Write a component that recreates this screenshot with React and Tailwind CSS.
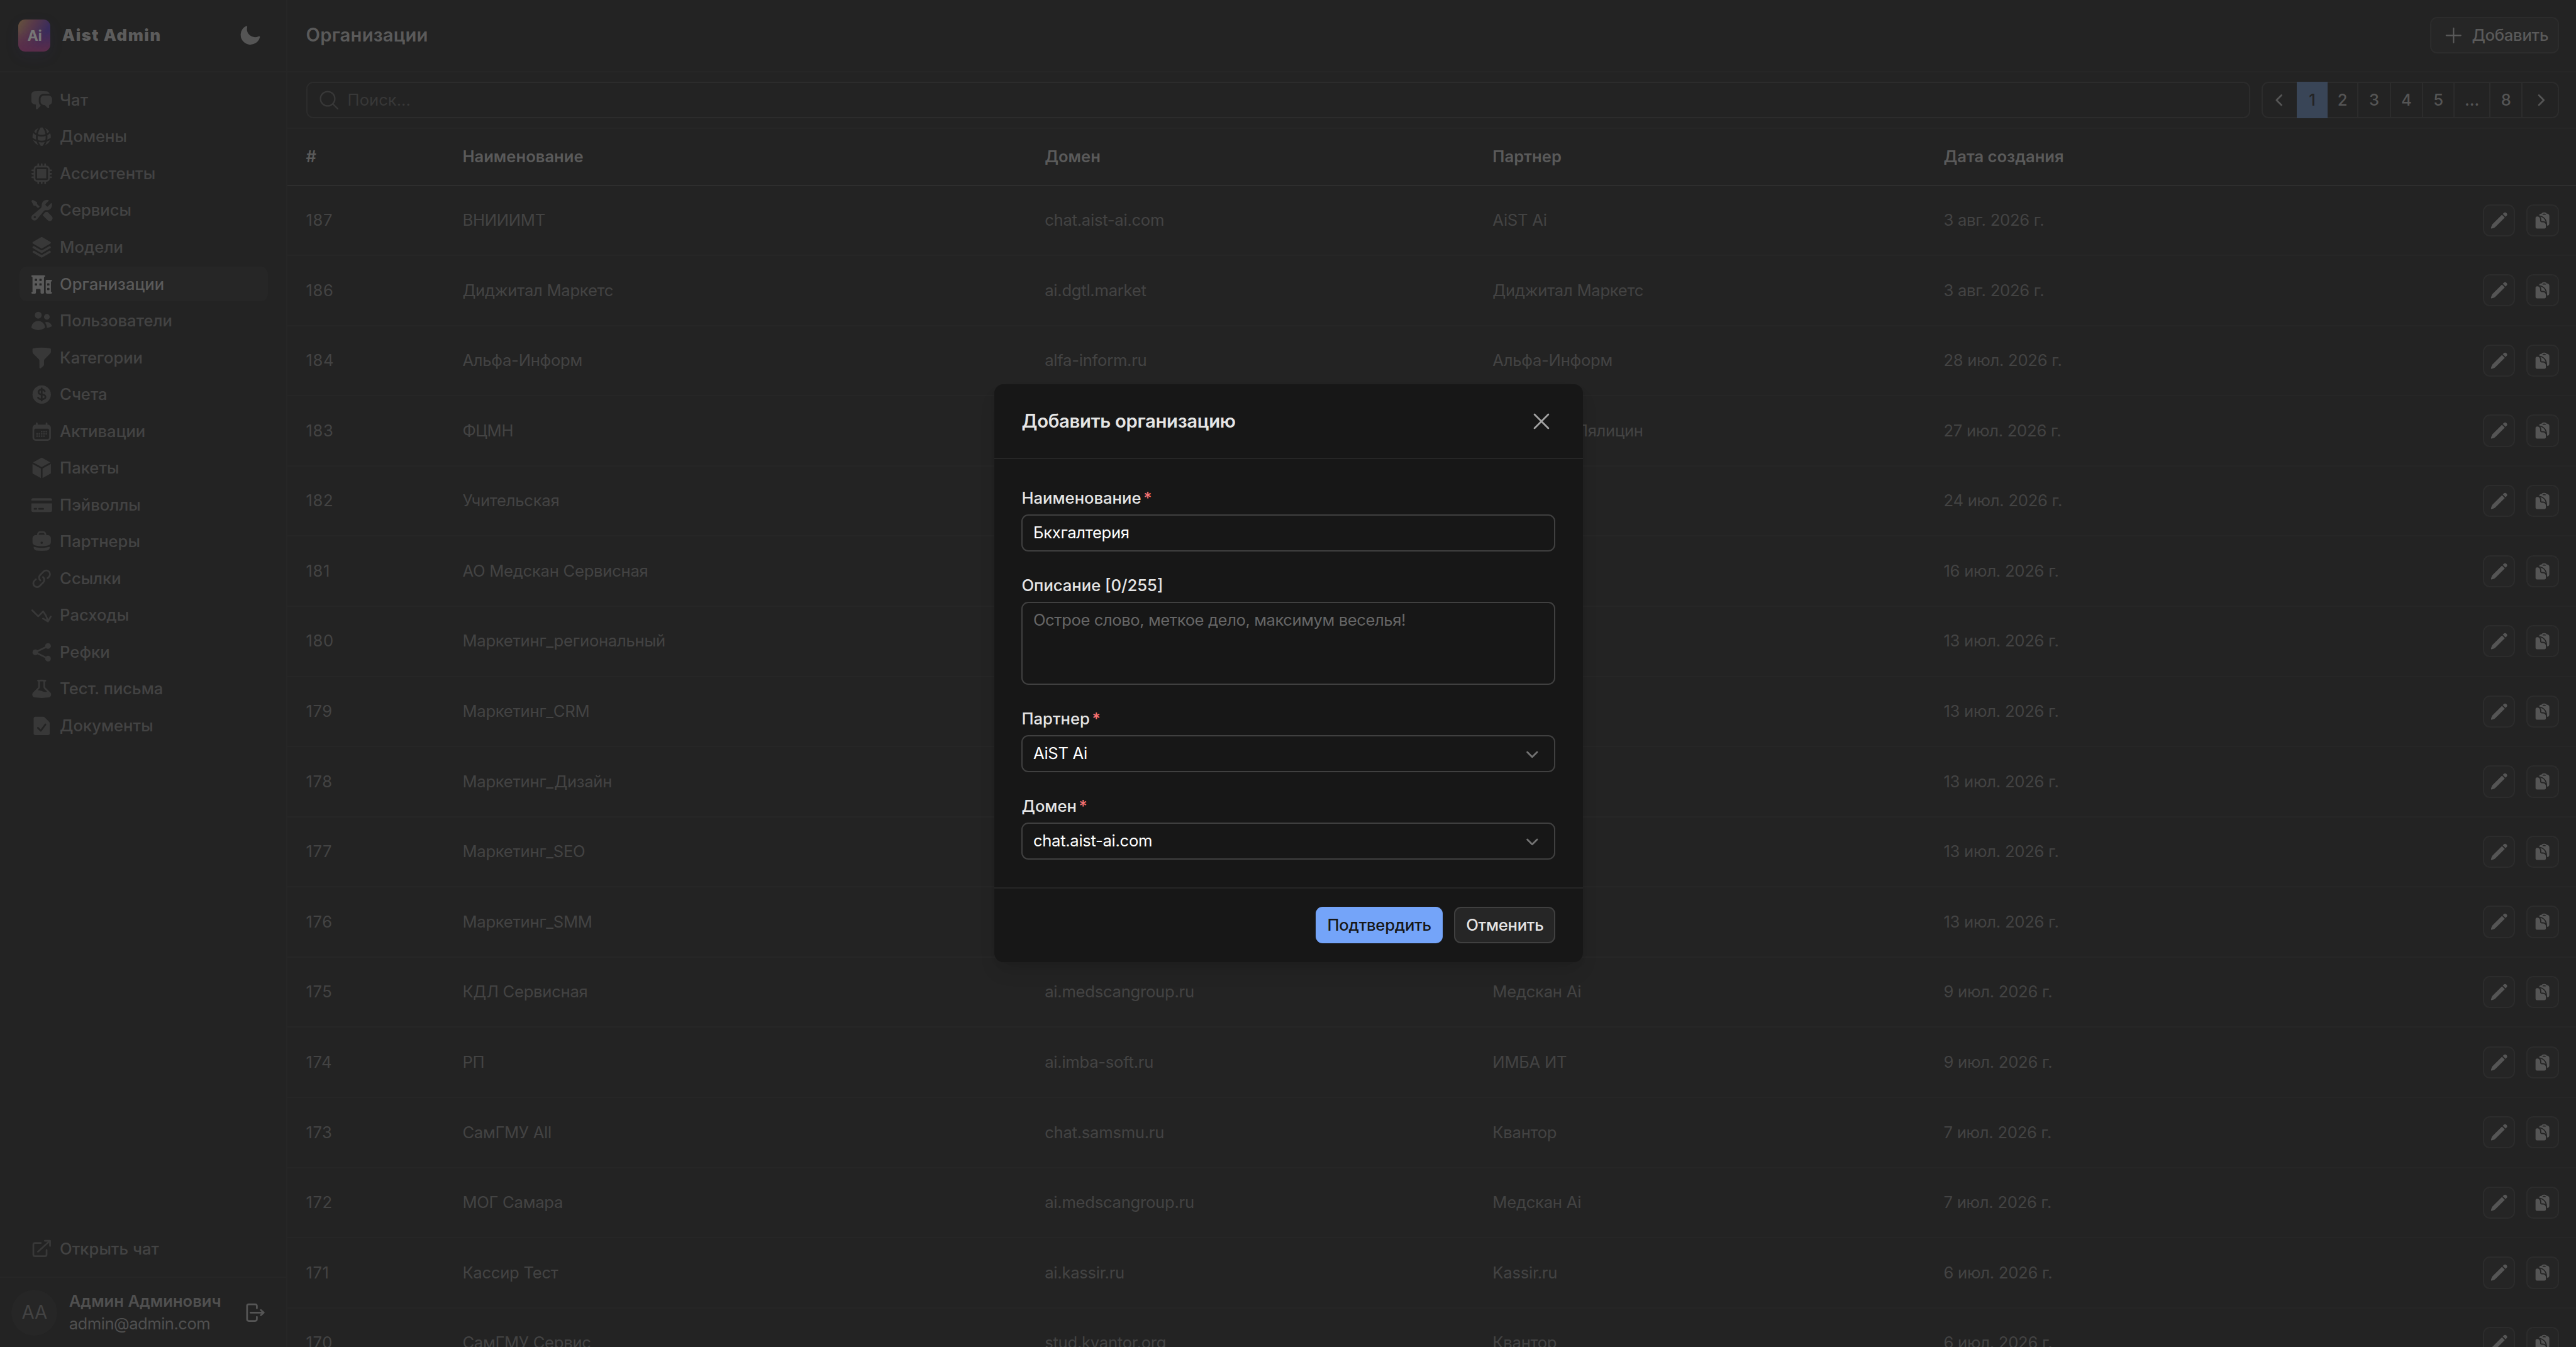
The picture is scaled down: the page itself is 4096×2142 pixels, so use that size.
import {
    HiClipboardDocument,
    HiMiniArrowRightOnRectangle,
    HiMiniArrowTopRightOnSquare,
    HiMiniArrowTrendingDown,
    HiMiniBeaker,
    HiMiniBriefcase,
    HiMiniBuildingOffice2,
    HiMiniCalendarDays,
    HiMiniChatBubbleLeftRight,
    HiMiniChevronDown,
    HiMiniChevronLeft,
    HiMiniChevronRight,
    HiMiniCpuChip,
    HiMiniCreditCard,
    HiMiniCube,
    HiMiniCurrencyDollar,
    HiMiniDocumentCheck,
    HiMiniFunnel,
    HiMiniGlobeAlt,
    HiMiniLink,
    HiMiniMoon,
    HiMiniShare,
    HiMiniSquare3Stack3D,
    HiMiniUsers,
    HiMiniWrenchScrewdriver,
    HiOutlineMagnifyingGlass,
    HiOutlinePlus,
    HiOutlineXMark,
    HiPencil,
} from 'react-icons/hi2';

document.documentElement.style.fontSize = `${(window.innerWidth / 2239) * 16}px`;

const NAV = [
    { label: 'Чат', icon: HiMiniChatBubbleLeftRight },
    { label: 'Домены', icon: HiMiniGlobeAlt },
    { label: 'Ассистенты', icon: HiMiniCpuChip },
    { label: 'Сервисы', icon: HiMiniWrenchScrewdriver },
    { label: 'Модели', icon: HiMiniSquare3Stack3D },
    { label: 'Организации', icon: HiMiniBuildingOffice2, active: true },
    { label: 'Пользователи', icon: HiMiniUsers },
    { label: 'Категории', icon: HiMiniFunnel },
    { label: 'Счета', icon: HiMiniCurrencyDollar },
    { label: 'Активации', icon: HiMiniCalendarDays },
    { label: 'Пакеты', icon: HiMiniCube },
    { label: 'Пэйволлы', icon: HiMiniCreditCard },
    { label: 'Партнеры', icon: HiMiniBriefcase },
    { label: 'Ссылки', icon: HiMiniLink },
    { label: 'Расходы', icon: HiMiniArrowTrendingDown },
    { label: 'Рефки', icon: HiMiniShare },
    { label: 'Тест. письма', icon: HiMiniBeaker },
    { label: 'Документы', icon: HiMiniDocumentCheck },
];

const ROWS = [
    { id: 187, name: 'ВНИИИМТ', domain: 'chat.aist-ai.com', partner: 'AiST Ai', date: '3 авг. 2026 г.' },
    { id: 186, name: 'Диджитал Маркетс', domain: 'ai.dgtl.market', partner: 'Диджитал Маркетс', date: '3 авг. 2026 г.' },
    { id: 184, name: 'Альфа-Информ', domain: 'alfa-inform.ru', partner: 'Альфа-Информ', date: '28 июл. 2026 г.' },
    { id: 183, name: 'ФЦМН', domain: 'chat.aist-ai.com', partner: 'Владимир Пялицин', date: '27 июл. 2026 г.' },
    { id: 182, name: 'Учительская', domain: 'chat.aist-ai.com', partner: 'AiST Ai', date: '24 июл. 2026 г.' },
    { id: 181, name: 'АО Медскан Сервисная', domain: 'ai.medscangroup.ru', partner: 'Медскан Ai', date: '16 июл. 2026 г.' },
    { id: 180, name: 'Маркетинг_региональный', domain: 'ai.medscangroup.ru', partner: 'Медскан Ai', date: '13 июл. 2026 г.' },
    { id: 179, name: 'Маркетинг_CRM', domain: 'ai.medscangroup.ru', partner: 'Медскан Ai', date: '13 июл. 2026 г.' },
    { id: 178, name: 'Маркетинг_Дизайн', domain: 'ai.medscangroup.ru', partner: 'Медскан Ai', date: '13 июл. 2026 г.' },
    { id: 177, name: 'Маркетинг_SEO', domain: 'ai.medscangroup.ru', partner: 'Медскан Ai', date: '13 июл. 2026 г.' },
    { id: 176, name: 'Маркетинг_SMM', domain: 'ai.medscangroup.ru', partner: 'Медскан Ai', date: '13 июл. 2026 г.' },
    { id: 175, name: 'КДЛ Сервисная', domain: 'ai.medscangroup.ru', partner: 'Медскан Ai', date: '9 июл. 2026 г.' },
    { id: 174, name: 'РП', domain: 'ai.imba-soft.ru', partner: 'ИМБА ИТ', date: '9 июл. 2026 г.' },
    { id: 173, name: 'СамГМУ All', domain: 'chat.samsmu.ru', partner: 'Квантор', date: '7 июл. 2026 г.' },
    { id: 172, name: 'МОГ Самара', domain: 'ai.medscangroup.ru', partner: 'Медскан Ai', date: '7 июл. 2026 г.' },
    { id: 171, name: 'Кассир Тест', domain: 'ai.kassir.ru', partner: 'Kassir.ru', date: '6 июл. 2026 г.' },
    { id: 170, name: 'СамГМУ Сервис', domain: 'stud.kvantor.org', partner: 'Квантор', date: '6 июл. 2026 г.' },
];

function Sidebar() {
    return (
        <aside className="flex h-full w-[15.625rem] shrink-0 flex-col border-r-2 border-[#262626]">
            <div className="flex h-[3.9375rem] shrink-0 items-center border-b-2 border-[#262626] pb-px pl-4 pr-4">
                <div className="flex size-7 items-center justify-center rounded-md bg-[linear-gradient(to_bottom,transparent_35%,#5a2c4a_100%),linear-gradient(120deg,#66533b_0%,#57384a_35%,#392c5c_70%,#3d2b5c_100%)] text-[0.8rem] font-bold tracking-tight text-[#777777] shadow-[0_0.25rem_0.75rem_rgba(60,50,120,0.12)]">
                    Ai
                </div>
                <span className="ml-2.5 text-sm font-black tracking-[0.06em] text-[#5c5c5c]">Aist Admin</span>
                <HiMiniMoon className="ml-auto mr-1.5 size-5 text-[#555555]" />
            </div>

            <nav className="flex flex-col px-4 py-2">
                {NAV.map(({ label, icon: Icon, active }) => (
                    <a key={label} className="flex h-8 py-[0.0625rem] pl-[0.0625rem]">
                        <span
                            className={
                                active
                                    ? 'flex grow items-center gap-1.5 rounded-md bg-[#262626] px-[0.5625rem] text-sm font-medium text-[#5a5a5a]'
                                    : 'flex grow items-center gap-1.5 px-[0.5625rem] text-sm font-medium text-[#434343]'
                            }
                        >
                            <Icon className={active ? 'size-5 text-[#5a5a5a]' : 'size-5 text-[#383838]'} />
                            {label}
                        </span>
                    </a>
                ))}
            </nav>

            <div className="mt-auto px-4 py-2">
                <a className="flex h-8 items-center gap-1.5 px-2.5 text-sm font-medium text-[#434343]">
                    <HiMiniArrowTopRightOnSquare className="size-5 text-[#383838]" />
                    Открыть чат
                </a>
            </div>

            <div className="flex shrink-0 items-center gap-2.5 border-t-2 border-[#262626] p-2.5 pr-[1.125rem]">
                <div className="flex size-10 items-center justify-center rounded-full bg-[#262626] text-base text-[#434343]">
                    АА
                </div>
                <div className="text-sm text-[#505050]">
                    <div className="font-semibold">Админ Админович</div>
                    <div className="tracking-[-0.02em]">admin@admin.com</div>
                </div>
                <HiMiniArrowRightOnRectangle className="ml-auto size-5 text-[#555555]" />
            </div>
        </aside>
    );
}

function Pagination() {
    return (
        <div className="flex h-8 shrink-0 items-stretch text-sm font-medium text-[#555555]">
            <div className="flex w-[1.92rem] items-center justify-center rounded-l-md border-2 border-r-0 border-[#2c2c2c]">
                <HiMiniChevronLeft className="size-5" />
            </div>
            <div className="flex w-[1.6625rem] items-center justify-center bg-[#394557] text-[#232323]">1</div>
            <div className="flex w-[1.69rem] items-center justify-center border-2 border-l-0 border-[#2c2c2c]">2</div>
            <div className="flex w-7 items-center justify-center border-y-2 border-r-2 border-[#2c2c2c]">3</div>
            <div className="flex w-7 items-center justify-center border-y-2 border-r-2 border-[#2c2c2c]">4</div>
            <div className="flex w-[1.725rem] items-center justify-center border-y-2 border-r-2 border-[#2c2c2c]">5</div>
            <div className="flex w-[1.9375rem] items-center justify-center border-y-2 border-r-2 border-[#2c2c2c]">...</div>
            <div className="flex w-7 items-center justify-center border-y-2 border-r-2 border-[#2c2c2c]">8</div>
            <div className="flex w-[1.955rem] items-center justify-center rounded-r-md border-y-2 border-r-2 border-[#2c2c2c]">
                <HiMiniChevronRight className="size-5" />
            </div>
        </div>
    );
}

function RowButton({ icon: Icon }) {
    return (
        <button className="flex size-7 items-center justify-center rounded-md border-2 border-[#2c2c2c] bg-[#252525] text-[#555555]">
            <Icon className="size-4" />
        </button>
    );
}

function Table() {
    return (
        <table className="w-full table-fixed text-left text-sm">
            <colgroup>
                <col className="w-[8.5rem]" />
                <col className="w-[31.63rem]" />
                <col className="w-[24.33rem]" />
                <col className="w-[24.5rem]" />
                <col />
                <col className="w-[5.0625rem]" />
            </colgroup>
            <thead>
                <tr className="h-[3.0625rem] border-b-2 border-[#2e2e2e] text-[#5a5a5a]">
                    <th className="px-4 font-semibold">#</th>
                    <th className="px-4 font-semibold">Наименование</th>
                    <th className="px-4 font-semibold">Домен</th>
                    <th className="px-4 font-semibold">Партнер</th>
                    <th className="px-4 font-semibold">Дата создания</th>
                    <th />
                </tr>
            </thead>
            <tbody className="tracking-[-0.01em] text-[#434343]">
                {ROWS.map((row) => (
                    <tr key={row.id} className="h-[3.8125rem] border-b-2 border-[#262626]">
                        <td className="px-4 tracking-[0.02em]">{row.id}</td>
                        <td className="px-4">{row.name}</td>
                        <td className="px-4">{row.domain}</td>
                        <td className="px-4">{row.partner}</td>
                        <td className="px-4">{row.date}</td>
                        <td>
                            <div className="flex gap-2.5">
                                <RowButton icon={HiPencil} />
                                <RowButton icon={HiClipboardDocument} />
                            </div>
                        </td>
                    </tr>
                ))}
            </tbody>
        </table>
    );
}

function Field({ label, required, children }) {
    return (
        <div>
            <div className="flex gap-0.5 text-sm font-medium text-[#e5e5e5]">
                {label}
                {required && <span className="text-[#f87171]">*</span>}
            </div>
            <div className="mt-1">{children}</div>
        </div>
    );
}

function Select({ value }) {
    return (
        <div className="flex h-8 items-center justify-between rounded-md border-2 border-[#404040] px-[0.5625rem] text-sm tracking-[-0.012em] text-white">
            {value}
            <HiMiniChevronDown className="size-5 text-[#737373]" />
        </div>
    );
}

function Modal() {
    return (
        <div className="flex h-[31.375rem] w-[32rem] flex-col rounded-lg bg-[#171717] shadow-[0_0.625rem_1rem_-0.1875rem_rgba(0,0,0,0.1),0_0.25rem_0.5rem_-0.25rem_rgba(0,0,0,0.1)]">
            <div className="flex h-[4.0625rem] items-center justify-between border-b-2 border-[#262626] px-6">
                <h2 className="text-base font-semibold tracking-[-0.01em] text-[#e5e5e5]">Добавить организацию</h2>
                <HiOutlineXMark className="size-6 text-[#a3a3a3]" />
            </div>

            <div className="flex grow flex-col gap-5 p-6">
                <Field label="Наименование" required>
                    <div className="flex h-8 items-center rounded-md border-2 border-[#404040] px-[0.5625rem] text-sm tracking-[-0.012em] text-white">
                        Бкхгалтерия
                    </div>
                </Field>
                <Field label="Описание [0/255]">
                    <div className="h-[4.5rem] rounded-md border-2 border-[#404040] px-[0.5625rem] py-[0.3125rem] text-sm tracking-[-0.016em] text-[#666666]">
                        Острое слово, меткое дело, максимум веселья!
                    </div>
                </Field>
                <Field label="Партнер" required>
                    <Select value="AiST Ai" />
                </Field>
                <Field label="Домен" required>
                    <Select value="chat.aist-ai.com" />
                </Field>
            </div>

            <div className="flex h-[4.0625rem] items-center justify-end gap-2.5 border-t-2 border-[#262626] px-6">
                <button className="h-8 w-[6.9rem] rounded-md bg-[#74a4f9] text-sm font-medium tracking-[-0.01em] text-[#171717]">
                    Подтвердить
                </button>
                <button className="h-8 w-[5.5rem] rounded-md border-2 border-[#404040] bg-[#262626] text-sm font-medium tracking-[-0.01em] text-[#e5e5e5]">
                    Отменить
                </button>
            </div>
        </div>
    );
}

export default function App() {
    return (
        <div className="relative flex h-screen w-screen overflow-hidden bg-[#232323] font-['Inter',sans-serif]">
            <Sidebar />

            <main className="flex min-w-0 grow flex-col">
                <header className="flex h-[3.9375rem] shrink-0 items-center justify-between border-b-2 border-[#262626] pb-px pl-4 pr-[0.9375rem]">
                    <h1 className="text-base font-semibold tracking-[0.005em] text-[#5a5a5a]">Организации</h1>
                    <button className="flex h-8 w-[6.975rem] items-center gap-1.5 rounded-md border-2 border-[#2c2c2c] bg-[#262626] pl-[0.5625rem] text-sm font-medium tracking-[-0.01em] text-[#5a5a5a]">
                        <HiOutlinePlus className="size-5" />
                        Добавить
                    </button>
                </header>

                <div className="flex h-[3.0625rem] shrink-0 items-center gap-2.5 border-b-2 border-[#262626] pl-4 pr-[0.9375rem]">
                    <div className="flex h-8 grow items-center gap-1.5 rounded-md border-2 border-[#2c2c2c] px-[0.5625rem] text-sm text-[#383838]">
                        <HiOutlineMagnifyingGlass className="size-5" />
                        Поиск...
                    </div>
                    <Pagination />
                </div>

                <Table />
            </main>

            <div className="absolute inset-0 flex items-center justify-center pb-px pl-[0.0625rem]">
                <Modal />
            </div>
        </div>
    );
}
